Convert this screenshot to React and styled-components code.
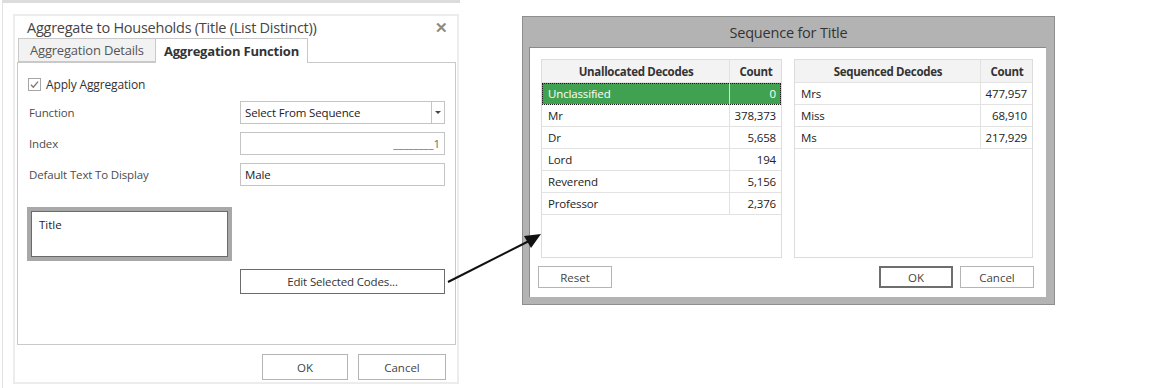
import React from 'react';
import styled, { createGlobalStyle } from 'styled-components';

const GlobalStyle = createGlobalStyle`
  html, body {
    margin: 0;
    padding: 0;
    background: #ffffff;
  }
  body {
    font-family: "Open Sans", "Noto Sans", sans-serif;
  }
`

const Desktop = styled.div`
  position: relative;
  width: 1153px;
  height: 388px;
  overflow: hidden;
  background: #ffffff;
`

const Backdrop = styled.div`
  position: absolute;
  left: 2px;
  top: 0;
  width: 458px;
  height: 388px;
  border-top: 3px solid #dcdcdc;
  border-left: 1px solid #e2e2e2;
  box-sizing: border-box;
`

// ---------- left dialog ----------

const Window = styled.div`
  position: absolute;
  left: 13px;
  top: 14px;
  width: 446px;
  height: 370px;
  box-sizing: border-box;
  border: 2px solid #ececec;
  background: #ffffff;
  display: flex;
  flex-direction: column;
`

const TitleBar = styled.div`
  height: 22px;
  display: flex;
  align-items: center;
  justify-content: space-between;
  padding: 0 9px 0 12px;
  font-size: 14.5px;
  color: #454545;
  letter-spacing: -0.25px;
`

const Close = styled.span`
  font-size: 15px;
  color: #8a8a8a;
  font-weight: 700;
`

const TabStrip = styled.div`
  height: 24px;
  display: flex;
  align-items: flex-end;
  padding-left: 3px;
`

const Tab = styled.div`
  height: ${p => (p.active ? '25px' : '24px')};
  margin-bottom: ${p => (p.active ? '-1px' : '0')};
  box-sizing: border-box;
  padding: 0 ${p => (p.active ? '8px' : '11px')};
  display: flex;
  align-items: center;
  border: 1px solid #c9c9c9;
  border-bottom: ${p => (p.active ? 'none' : '1px solid #c9c9c9')};
  border-left: ${p => (p.active ? 'none' : '1px solid #c9c9c9')};
  background: ${p => (p.active ? '#ffffff' : '#f2f2f2')};
  font-size: 13px;
  font-weight: ${p => (p.active ? 700 : 400)};
  color: ${p => (p.active ? '#333333' : '#555555')};
  letter-spacing: -0.2px;
  position: relative;
  z-index: 1;
`

const Panel = styled.div`
  margin: 0 1px 0 2px;
  height: 283px;
  box-sizing: border-box;
  border: 1px solid #c9c9c9;
  padding: 13px 10px 0 11px;
  display: flex;
  flex-direction: column;
`

const CheckRow = styled.label`
  display: flex;
  align-items: center;
  gap: 5px;
  font-size: 12px;
  color: #333333;
  height: 16px;
  margin-left: -1px;
  letter-spacing: -0.15px;
`

const FormGrid = styled.div`
  margin-top: 9px;
  display: grid;
  grid-template-columns: 1fr 205px;
  grid-auto-rows: 23px;
  row-gap: 8px;
  align-items: center;
`

const Label = styled.div`
  font-size: 11.5px;
  color: #4c4c4c;
  letter-spacing: -0.15px;
`

const Field = styled.div`
  height: 23px;
  box-sizing: border-box;
  border: 1px solid #c4c4c4;
  display: flex;
  align-items: center;
  justify-content: ${p => (p.right ? 'flex-end' : 'space-between')};
  padding: ${p => (p.select ? '0 0 0 4px' : '0 4px')};
  font-size: 11.5px;
  color: ${p => (p.masked ? '#55786a' : '#222222')};
  letter-spacing: ${p => (p.masked ? '0' : '-0.15px')};
  background: #ffffff;
`

const DropButton = styled.span`
  width: 12px;
  height: 21px;
  border-left: 1px solid #c4c4c4;
  display: flex;
  align-items: center;
  justify-content: center;
`

const Caret = styled.span`
  width: 0;
  height: 0;
  border-left: 3px solid transparent;
  border-right: 3px solid transparent;
  border-top: 3px solid #444444;
`

const CodeBox = styled.div`
  margin: 21px 0 0 -2px;
  width: 205px;
  height: 54px;
  box-sizing: border-box;
  border: 4px solid #a8a8a8;
  display: flex;
`

const CodeInner = styled.div`
  flex: 1;
  border: 1px solid #6a6a6a;
  background: #ffffff;
  padding: 5px 7px;
  font-size: 11.5px;
  color: #222222;
`

const EditButton = styled.button`
  align-self: flex-end;
  margin-top: 8px;
  width: 205px;
  height: 25px;
  box-sizing: border-box;
  border: 1px solid #6c6c6c;
  background: #ffffff;
  font-family: inherit;
  font-size: 11.5px;
  color: #333333;
  letter-spacing: -0.15px;
  padding: 0;
`

const Footer = styled.div`
  flex: 1;
  display: flex;
  justify-content: flex-end;
  align-items: flex-start;
  gap: 10px;
  padding: 9px 11px 0 0;
`

const DialogButton = styled.button`
  width: ${p => p.w || 86}px;
  height: ${p => p.h || 26}px;
  box-sizing: border-box;
  border: ${p => (p.primary ? '2px solid #6e6e6e' : '1px solid #b4b4b4')};
  background: #ffffff;
  font-family: inherit;
  font-size: 11.5px;
  color: #444444;
  padding: 0;
`

// ---------- right dialog ----------

const SeqWindow = styled.div`
  position: absolute;
  left: 522px;
  top: 16px;
  width: 533px;
  height: 289px;
  box-sizing: border-box;
  background: #b3b3b3;
  border: 1px solid #8e8e8e;
  display: flex;
  flex-direction: column;
`

const SeqTitle = styled.div`
  height: 30px;
  display: flex;
  align-items: center;
  justify-content: center;
  font-size: 14.5px;
  color: #333333;
  letter-spacing: -0.2px;
`

const SeqBody = styled.div`
  margin: 0 8px 7px 6px;
  flex: 1;
  background: #ffffff;
  border-top: 1px solid #8a8a8a;
  border-left: 1px solid #8a8a8a;
  padding: 11px 12px 0 11px;
  display: flex;
  flex-direction: column;
`

const Grids = styled.div`
  display: flex;
  gap: 12px;
  height: 199px;
`

const Grid = styled.div`
  width: ${p => p.w}px;
  box-sizing: border-box;
  border: 1px solid #dcdcdc;
  display: flex;
  flex-direction: column;
`

const Row = styled.div`
  display: grid;
  grid-template-columns: 1fr 51px;
  height: ${p => (p.head ? 23 : 22)}px;
  box-sizing: border-box;
  border-bottom: 1px solid #e2e2e2;
  background: ${p => (p.head ? '#f3f3f3' : p.selected ? '#40a251' : '#ffffff')};
  outline: ${p => (p.selected ? '1px dotted #1a1a1a' : 'none')};
  outline-offset: -1px;
  color: ${p => (p.selected ? '#ffffff' : '#222222')};
  font-size: 11.5px;
  font-weight: ${p => (p.head ? 700 : 400)};
  letter-spacing: ${p => (p.head ? '-0.3px' : '-0.15px')};
`

const Cell = styled.div`
  display: flex;
  align-items: center;
  justify-content: ${p => (p.head ? 'center' : p.num ? 'flex-end' : 'flex-start')};
  padding: 0 5px 0 6px;
  border-right: ${p => (p.last ? 'none' : `1px solid ${p.sel ? '#cfe8d3' : '#e2e2e2'}`)};
  color: ${p => (p.head ? '#333333' : 'inherit')};
`

const SeqButtons = styled.div`
  display: flex;
  align-items: center;
  gap: 7px;
  margin: 8px 0 0 -3px;
`

const Spacer = styled.div`
  flex: 1;
`

const ArrowLayer = styled.svg`
  position: absolute;
  left: 0;
  top: 0;
  pointer-events: none;
`

const CheckIcon = () => (
  <svg width="13" height="13" viewBox="0 0 13 13">
    <rect x="0.5" y="0.5" width="12" height="12" fill="#fff" stroke="#a6a6a6" />
    <path d="M3 6.8 L5.3 9.2 L10 3.6" fill="none" stroke="#777" strokeWidth="1.3" />
  </svg>
)

const unallocated = [
  ['Unclassified', '0'],
  ['Mr', '378,373'],
  ['Dr', '5,658'],
  ['Lord', '194'],
  ['Reverend', '5,156'],
  ['Professor', '2,376'],
]

const sequenced = [
  ['Mrs', '477,957'],
  ['Miss', '68,910'],
  ['Ms', '217,929'],
]

const DataGrid = ({ title, rows, w, selectedIndex }) => (
  <Grid w={w}>
    <Row head>
      <Cell head>{title}</Cell>
      <Cell head last>Count</Cell>
    </Row>
    {rows.map(([name, count], i) => (
      <Row key={name} selected={i === selectedIndex}>
        <Cell sel={i === selectedIndex}>{name}</Cell>
        <Cell num last>{count}</Cell>
      </Row>
    ))}
  </Grid>
)

const App = () => {
  return (
    <>
      <GlobalStyle />
      <Desktop>
        <Backdrop />
        <Window>
          <TitleBar>
            <span>Aggregate to Households (Title (List Distinct))</span>
            <Close>✕</Close>
          </TitleBar>
          <TabStrip>
            <Tab>Aggregation Details</Tab>
            <Tab active>Aggregation Function</Tab>
          </TabStrip>
          <Panel>
            <CheckRow>
              <CheckIcon />
              Apply Aggregation
            </CheckRow>
            <FormGrid>
              <Label>Function</Label>
              <Field select>
                Select From Sequence
                <DropButton><Caret /></DropButton>
              </Field>
              <Label>Index</Label>
              <Field right masked>________1</Field>
              <Label>Default Text To Display</Label>
              <Field>Male</Field>
            </FormGrid>
            <CodeBox>
              <CodeInner>Title</CodeInner>
            </CodeBox>
            <EditButton>Edit Selected Codes...</EditButton>
          </Panel>
          <Footer>
            <DialogButton w={86}>OK</DialogButton>
            <DialogButton w={88}>Cancel</DialogButton>
          </Footer>
        </Window>

        <SeqWindow>
          <SeqTitle>Sequence for Title</SeqTitle>
          <SeqBody>
            <Grids>
              <DataGrid title="Unallocated Decodes" rows={unallocated} w={241} selectedIndex={0} />
              <DataGrid title="Sequenced Decodes" rows={sequenced} w={239} />
            </Grids>
            <SeqButtons>
              <DialogButton w={74} h={22}>Reset</DialogButton>
              <Spacer />
              <DialogButton w={74} h={22} primary>OK</DialogButton>
              <DialogButton w={74} h={22}>Cancel</DialogButton>
            </SeqButtons>
          </SeqBody>
        </SeqWindow>

        <ArrowLayer width="1153" height="388">
          <line x1="448" y1="282" x2="531" y2="240" stroke="#111" strokeWidth="2" />
          <polygon points="541,234 524,236 531,248" fill="#111" />
        </ArrowLayer>
      </Desktop>
    </>
  );
}

export default App;
